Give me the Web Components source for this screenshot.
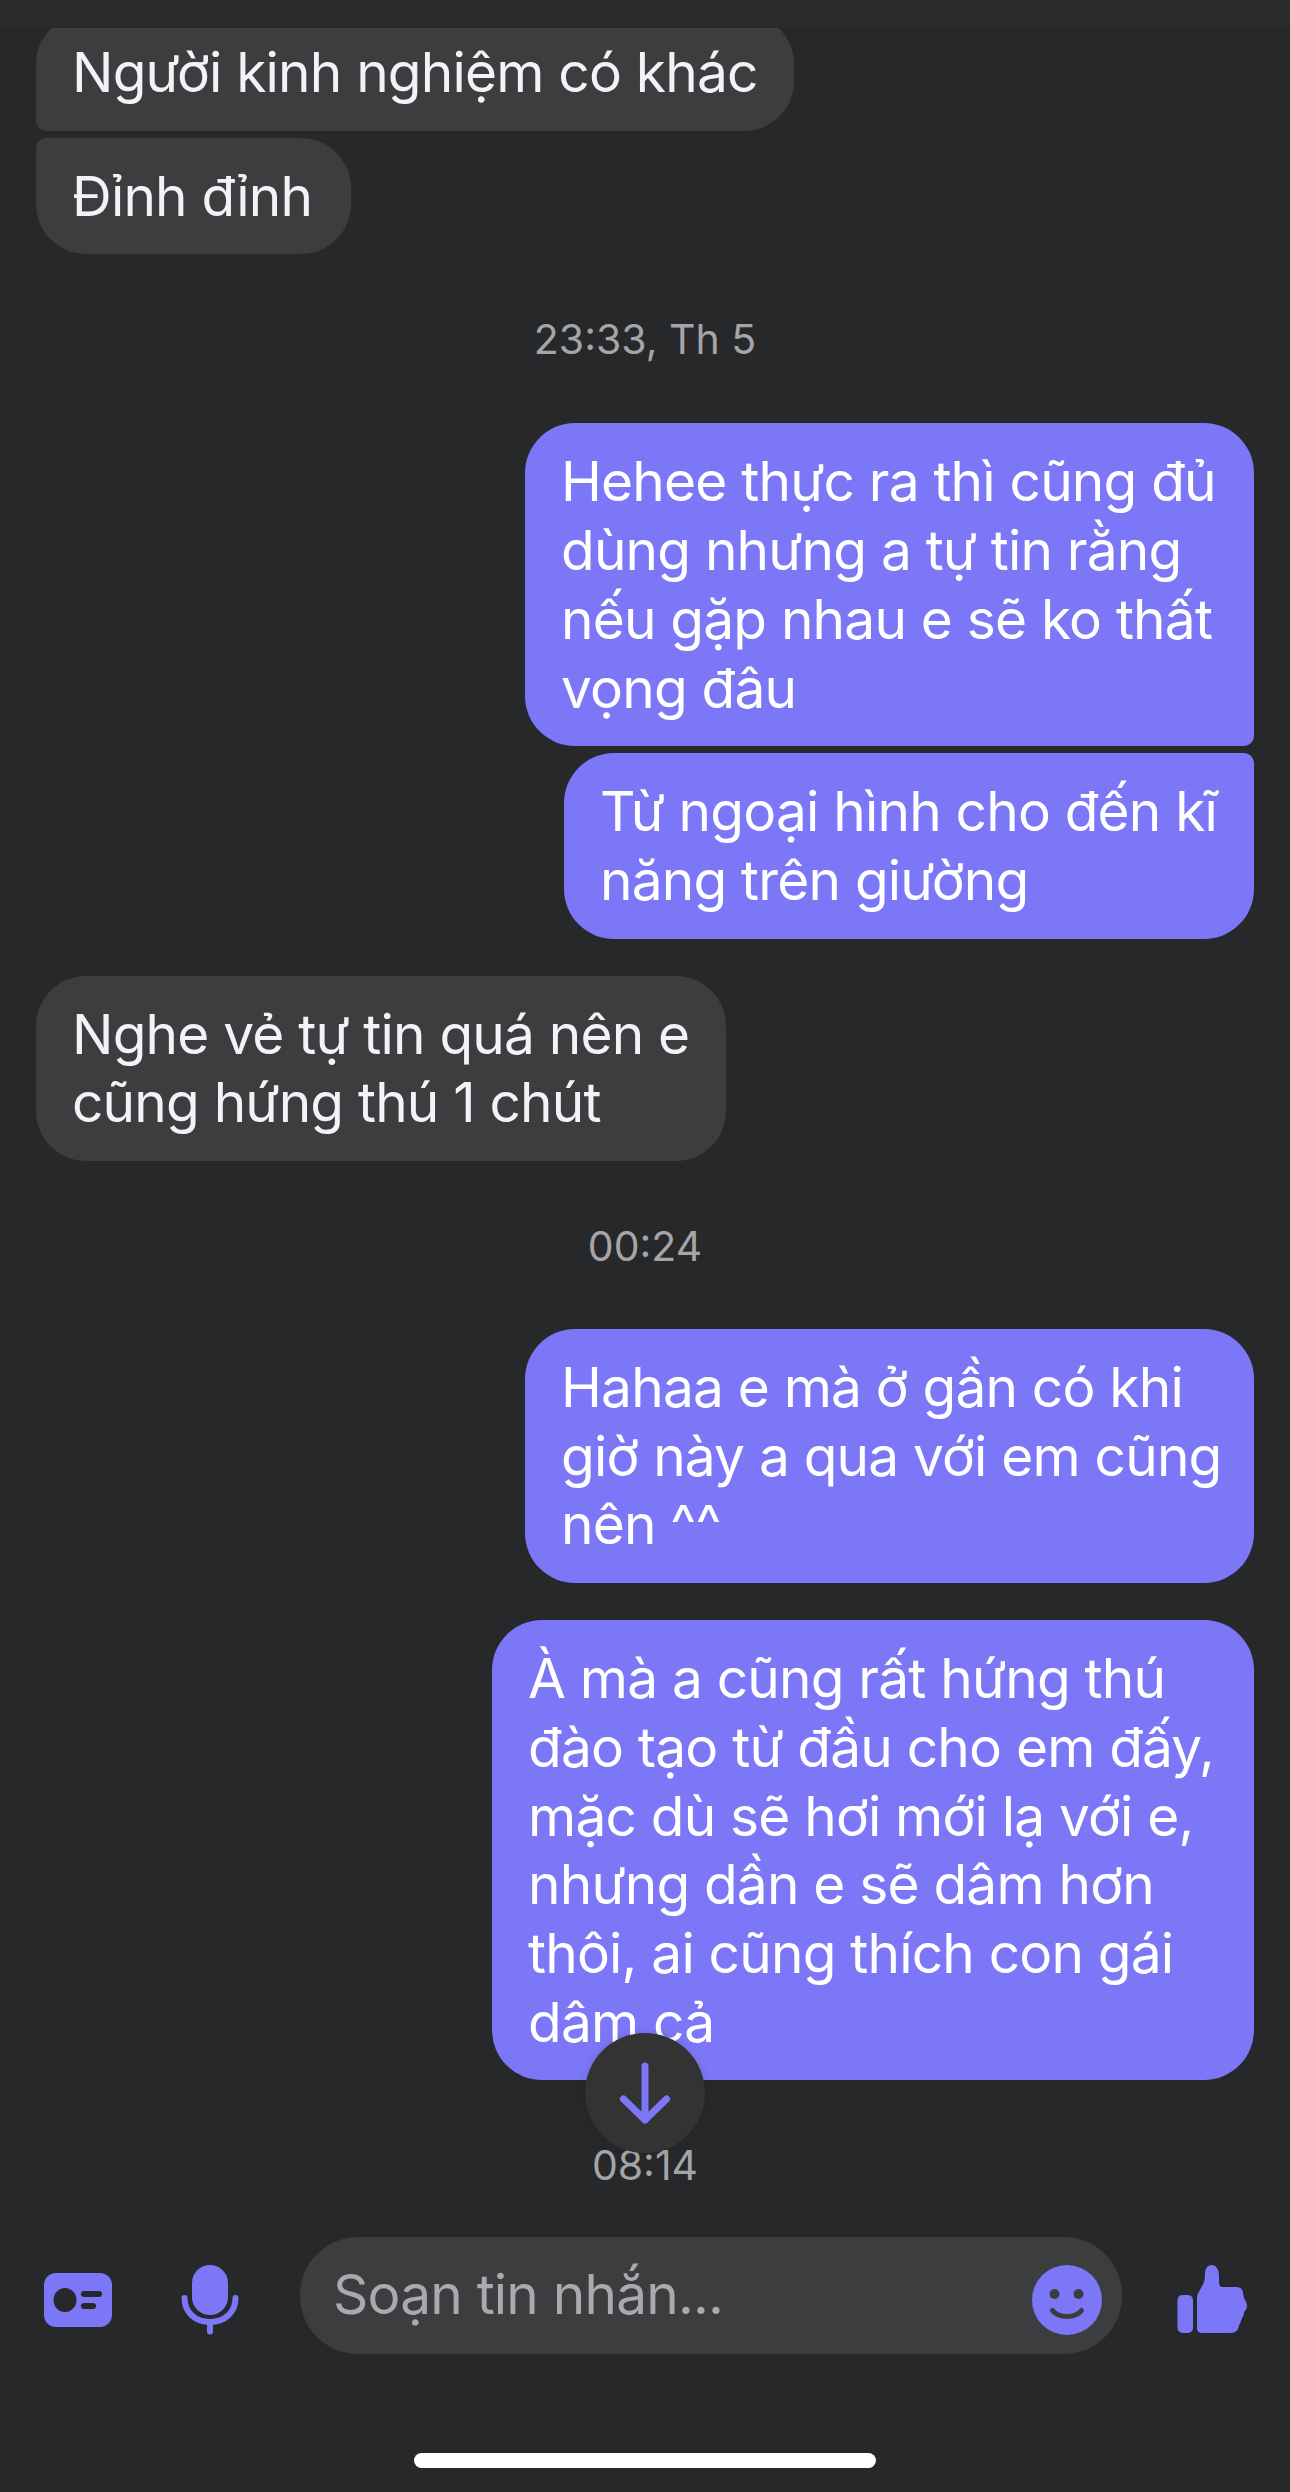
<!DOCTYPE html>
<html lang="vi">
<head>
<meta charset="utf-8">
<title>Chat</title>
<style>
  html, body { margin: 0; background: #27282a; }
</style>
</head>
<body>
<chat-app>
  <chat-bubble from="other" pos="end" width="758" first>Người kinh nghiệm có khác</chat-bubble>
  <chat-bubble from="other" pos="start" width="315" gap="7">Đỉnh đỉnh</chat-bubble>
  <chat-time after="61">23:33, Th 5</chat-time>
  <chat-bubble from="me" pos="end" width="729">Hehee thực ra thì cũng đủ<br>dùng nhưng a tự tin rằng<br>nếu gặp nhau e sẽ ko thất<br>vọng đâu</chat-bubble>
  <chat-bubble from="me" pos="start" width="690" gap="7">Từ ngoại hình cho đến kĩ<br>năng trên giường</chat-bubble>
  <chat-bubble from="other" width="690" gap="37">Nghe vẻ tự tin quá nên e<br>cũng hứng thú 1 chút</chat-bubble>
  <chat-time after="60">00:24</chat-time>
  <chat-bubble from="me" width="729">Hahaa e mà ở gần có khi<br>giờ này a qua với em cũng<br>nên ^^</chat-bubble>
  <chat-bubble from="me" width="762" gap="37">À mà a cũng rất hứng thú<br>đào tạo từ đầu cho em đấy,<br>mặc dù sẽ hơi mới lạ với e,<br>nhưng dần e sẽ dâm hơn<br>thôi, ai cũng thích con gái<br>dâm cả</chat-bubble>
  <chat-time>08:14</chat-time>
</chat-app>

<script>
const ACCENT = "#7c77f7";
const FONT = `"Inter", "Noto Sans", "Liberation Sans", sans-serif`;

class ChatBubble extends HTMLElement {
  constructor() {
    super();
    this.attachShadow({ mode: "open" });
  }

  connectedCallback() {
    const mine = this.getAttribute("from") === "me";
    const pos = this.getAttribute("pos");
    const big = "50px", small = "10px";
    // the corner facing the neighbouring bubble in a group is the small one
    let radius = `${big}`;
    if (mine && pos === "end") radius = `${big} ${big} ${small} ${big}`;
    if (mine && pos === "start") radius = `${big} ${small} ${big} ${big}`;
    if (!mine && pos === "end") radius = `${big} ${big} ${big} ${small}`;
    if (!mine && pos === "start") radius = `${small} ${big} ${big} ${big}`;

    this.shadowRoot.innerHTML = /* html */`
      <style>
        :host {
          display: block;
          box-sizing: border-box;
          width: ${this.getAttribute("width")}px;
          margin-top: ${this.hasAttribute("first") ? -14 : this.getAttribute("gap") ?? 0}px;
          align-self: ${mine ? "flex-end" : "flex-start"};
          padding: 24px 30px 24px 36px;
          border-radius: ${radius};
          background: ${mine ? ACCENT : "#3c3d3f"};
          color: ${mine ? "#fff" : "#f2f3f6"};
          font: 400 55px/68.7px ${FONT};
          letter-spacing: -0.8px;
          white-space: nowrap;
        }
      </style>
      <slot></slot>
    `;
  }
}

class ChatTime extends HTMLElement {
  constructor() {
    super();
    this.attachShadow({ mode: "open" });
  }

  connectedCallback() {
    this.shadowRoot.innerHTML = /* html */`
      <style>
        :host {
          display: block;
          margin: 62px 0 ${this.getAttribute("after") ?? 0}px;
          text-align: center;
          color: #a4a5a8;
          font: 400 41px/46px ${FONT};
        }
      </style>
      <slot></slot>
    `;
  }
}

class ScrollDown extends HTMLElement {
  constructor() {
    super();
    this.attachShadow({ mode: "open" });
    this.shadowRoot.innerHTML = /* html */`
      <style>
        :host {
          position: absolute;
          top: 2033px;
          left: 585px;
          width: 120px;
          height: 120px;
          border-radius: 50%;
          background: #333334;
          box-shadow: 0 0 10px rgba(0, 0, 0, .12);
        }
        svg { display: block; }
      </style>
      <svg width="120" height="120" fill="none" stroke="${ACCENT}" stroke-width="7" stroke-linecap="round" stroke-linejoin="round">
        <path d="M60 33V87M38.500 66 60 87 81.500 66"/>
      </svg>
    `;
  }
}

class ChatComposer extends HTMLElement {
  constructor() {
    super();
    this.attachShadow({ mode: "open" });
    this.shadowRoot.innerHTML = /* html */`
      <style>
        :host {
          display: flex;
          align-items: flex-start;
          flex: none;
          height: 138px;
          padding-left: 44px;
        }
        svg { display: block; flex: none; }
        .card { margin-top: 36px; }
        .mic { margin: 28px 0 0 69px; }
        .thumb { margin: 28px 0 0 55px; }
        .field {
          box-sizing: border-box;
          display: flex;
          align-items: center;
          justify-content: space-between;
          width: 822px;
          height: 117px;
          margin-left: 61px;
          padding: 0 20px 0 33px;
          border-radius: 58px;
          background: #3c3d3f;
          color: #a9aaad;
          font: 400 55px/68px ${FONT};
          letter-spacing: -0.8px;
        }
        .field span { margin-bottom: 3px; }
        .field svg { margin-top: 9px; }
      </style>
      <svg class="card" width="68" height="54" viewBox="0 0 68 54">
        <rect width="68" height="54" rx="12" fill="${ACCENT}"/>
        <ellipse cx="21" cy="27" rx="11.500" ry="12" fill="#27282a"/>
        <rect x="37" y="18" width="21" height="6" rx="3" fill="#27282a"/>
        <rect x="37" y="30" width="15" height="6" rx="3" fill="#27282a"/>
      </svg>
      <svg class="mic" width="58" height="70" viewBox="0 0 58 70" fill="none" stroke="${ACCENT}" stroke-linecap="round">
        <rect x="11" y="0" width="36" height="50" rx="18" fill="${ACCENT}" stroke="none"/>
        <path d="M3.500 33C3.500 47 14 57 29 57 44 57 54.500 47 54.500 33" stroke-width="6"/>
        <path d="M29 57V66.500" stroke-width="6"/>
      </svg>
      <div class="field">
        <span>Soạn tin nhắn...</span>
        <svg width="70" height="70" viewBox="0 0 70 70">
          <circle cx="35" cy="35" r="35" fill="${ACCENT}"/>
          <circle cx="22.500" cy="29" r="5" fill="#3c3d3f"/>
          <circle cx="46.500" cy="29" r="5" fill="#3c3d3f"/>
          <path d="M20.500 45.500C24 50 29 51.500 35 51.500 41 51.500 46 50 49.500 45.500" fill="none" stroke="#3c3d3f" stroke-width="5" stroke-linecap="round"/>
        </svg>
      </div>
      <svg class="thumb" width="70" height="68" viewBox="0 0 70 68" fill="${ACCENT}">
        <rect x="0.500" y="30" width="15.500" height="38" rx="5"/>
        <path d="M20 33C20 29 22 27 24 23 27 18 28 15 28 9 28 3 31 0 35 0 39 0 42 4 42 11V17C42 20 43 22 46 22H59C63 22 66 24 66 28 66 30 67 32 67 33 69 36 70 39 70 41 70 44 68 46 67 47 67 50 66 52 65 53 64 56 63 59 62 60 62 65 58 68 54 68H25C22 68 20 66 20 63Z"/>
      </svg>
    `;
  }
}

class HomeIndicator extends HTMLElement {
  constructor() {
    super();
    this.attachShadow({ mode: "open" });
    this.shadowRoot.innerHTML = /* html */`
      <style>
        :host {
          display: flex;
          justify-content: center;
          flex: none;
          height: 39px;
        }
        div {
          width: 462px;
          height: 15px;
          border-radius: 8px;
          background: #fff;
        }
      </style>
      <div></div>
    `;
  }
}

class ChatApp extends HTMLElement {
  constructor() {
    super();
    this.attachShadow({ mode: "open" });
    this.shadowRoot.innerHTML = /* html */`
      <style>
        :host {
          position: relative;
          display: flex;
          flex-direction: column;
          width: 1290px;
          height: 2492px;
          background: #27282a;
          overflow: hidden;
        }
        header {
          flex: none;
          height: 28px;
          background: #2a2b2d;
          border-bottom: 1px solid #252628;
          box-sizing: border-box;
        }
        main {
          flex: 1;
          min-height: 0;
          display: flex;
          flex-direction: column;
          padding: 0 36px;
          overflow: hidden;
        }
        .spacer { flex: none; height: 78px; }
      </style>
      <header></header>
      <main><slot></slot></main>
      <scroll-down></scroll-down>
      <chat-composer></chat-composer>
      <div class="spacer"></div>
      <home-indicator></home-indicator>
    `;
  }
}

customElements.define("chat-bubble", ChatBubble);
customElements.define("chat-time", ChatTime);
customElements.define("scroll-down", ScrollDown);
customElements.define("chat-composer", ChatComposer);
customElements.define("home-indicator", HomeIndicator);
customElements.define("chat-app", ChatApp);
</script>
</body>
</html>
